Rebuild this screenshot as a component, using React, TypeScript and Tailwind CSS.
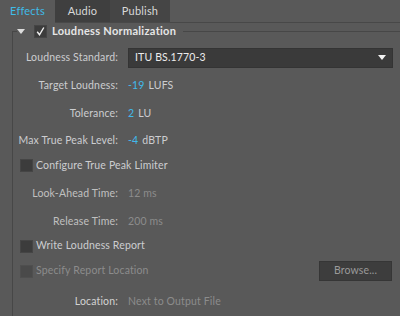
import React from "react";

const Check = ({ checked, disabled }: { checked?: boolean; disabled?: boolean }) => (
  <div
    className={`w-[13px] h-[13px] shrink-0 flex items-center justify-center border ${
      disabled ? "bg-[#4a4a4a] border-[#4f4f4f]" : "bg-[#3c3c3c] border-[#454545]"
    }`}
  >
    {checked && (
      <svg width="11" height="11" viewBox="0 0 11 11">
        <path d="M2.2 5.8 L4.5 8.8 L8.8 1.5" stroke="#f0f0f0" strokeWidth="1.4" fill="none" />
      </svg>
    )}
  </div>
);

const Label = ({ children, className = "" }: { children: React.ReactNode; className?: string }) => (
  <div className={`w-[105px] shrink-0 text-right whitespace-nowrap ${className}`}>{children}</div>
);

export default function App() {
  return (
    <div
      className="w-[400px] h-[316px] overflow-hidden bg-[#595959] text-[10.5px] tracking-[0.15px] text-[#cccdd0] flex flex-col whitespace-nowrap"
      style={{ fontFamily: 'Lato, "Liberation Sans", sans-serif' }}
    >
      {/* Tabs */}
      <div className="flex h-[23px] shrink-0 text-[11px] tracking-[0.2px]">
        <div className="w-[55px] flex items-center justify-center text-[#3fbbe8]">Effects</div>
        <div className="w-[55px] flex items-center justify-center text-[#d8d8d8] bg-[#3f3f3f] border-b border-[#484848]">
          Audio
        </div>
        <div className="w-[60px] flex items-center justify-center text-[#d8d8d8] bg-[#454545] border-b border-[#484848]">
          Publish
        </div>
        <div className="flex-1 border-b border-[#484848]" />
      </div>

      <div className="ml-[12px] flex flex-col">
        {/* Section header */}
        <div className="flex items-center h-[17px]">
          <div className="w-[5px] h-[9px] self-end border-l border-t border-[#474747]" />
          <svg width="9" height="6" viewBox="0 0 9 6" className="mr-[8px]">
            <path d="M0 0 H8 L4 5 Z" fill="#dcdcdc" />
          </svg>
          <Check checked />
          <div className="ml-[5px] font-bold text-[11px] text-[#e6e6e6] tracking-[0.3px]">Loudness Normalization</div>
          <div className="flex-1 h-px bg-[#474747] ml-[7px] mt-[-1px]" />
        </div>

        {/* Body */}
        <div className="border-l border-[#474747] flex flex-col pt-[4px]">
          <div className="flex items-center h-[28px]">
            <Label>Loudness Standard:</Label>
            <div className="ml-[10px] mr-[7px] flex-1 h-[20px] bg-[#3a3a3a] border border-[#343434] flex items-center pl-[6px] pr-[5px] text-[#ececec]">
              <span className="flex-1">ITU BS.1770-3</span>
              <svg width="9" height="6" viewBox="0 0 9 6">
                <path d="M0 0 H8 L4 5 Z" fill="#f2f2f2" />
              </svg>
            </div>
          </div>
          <div className="flex items-center h-[28px]">
            <Label>Target Loudness:</Label>
            <span className="ml-[10px] text-[#41b9ec]">-19</span>
            <span className="ml-[4px]">LUFS</span>
          </div>
          <div className="flex items-center h-[28px]">
            <Label>Tolerance:</Label>
            <span className="ml-[10px] text-[#41b9ec]">2</span>
            <span className="ml-[4px]">LU</span>
          </div>
          <div className="flex items-center h-[26px]">
            <Label>Max True Peak Level:</Label>
            <span className="ml-[10px] text-[#41b9ec]">-4</span>
            <span className="ml-[4px]">dBTP</span>
          </div>
          <div className="flex items-center h-[23px] pl-[7px]">
            <Check />
            <span className="ml-[3px]">Configure True Peak Limiter</span>
          </div>
          <div className="flex items-center h-[34px]">
            <Label className="text-[#c0c0c0]">Look-Ahead Time:</Label>
            <span className="ml-[10px] text-[#8c8c8c]">12 ms</span>
          </div>
          <div className="flex items-center h-[21px]">
            <Label className="text-[#c0c0c0]">Release Time:</Label>
            <span className="ml-[10px] text-[#8c8c8c]">200 ms</span>
          </div>
          <div className="flex items-center h-[28px] pl-[7px]">
            <Check />
            <span className="ml-[3px]">Write Loudness Report</span>
          </div>
          <div className="flex items-center h-[22px] pl-[7px] pr-[8px]">
            <Check disabled />
            <span className="ml-[3px] flex-1 text-[#8c8c8c]">Specify Report Location</span>
            <div className="w-[73px] h-[20px] bg-[#3d3d3d] border border-[#363636] flex items-center justify-center text-[#9a9a9a]">
              Browse...
            </div>
          </div>
          <div className="flex items-center h-[40px]">
            <Label className="text-[#d2d2d2]">Location:</Label>
            <span className="ml-[10px] text-[#8c8c8c]">Next to Output File</span>
          </div>
        </div>
      </div>
    </div>
  );
}
